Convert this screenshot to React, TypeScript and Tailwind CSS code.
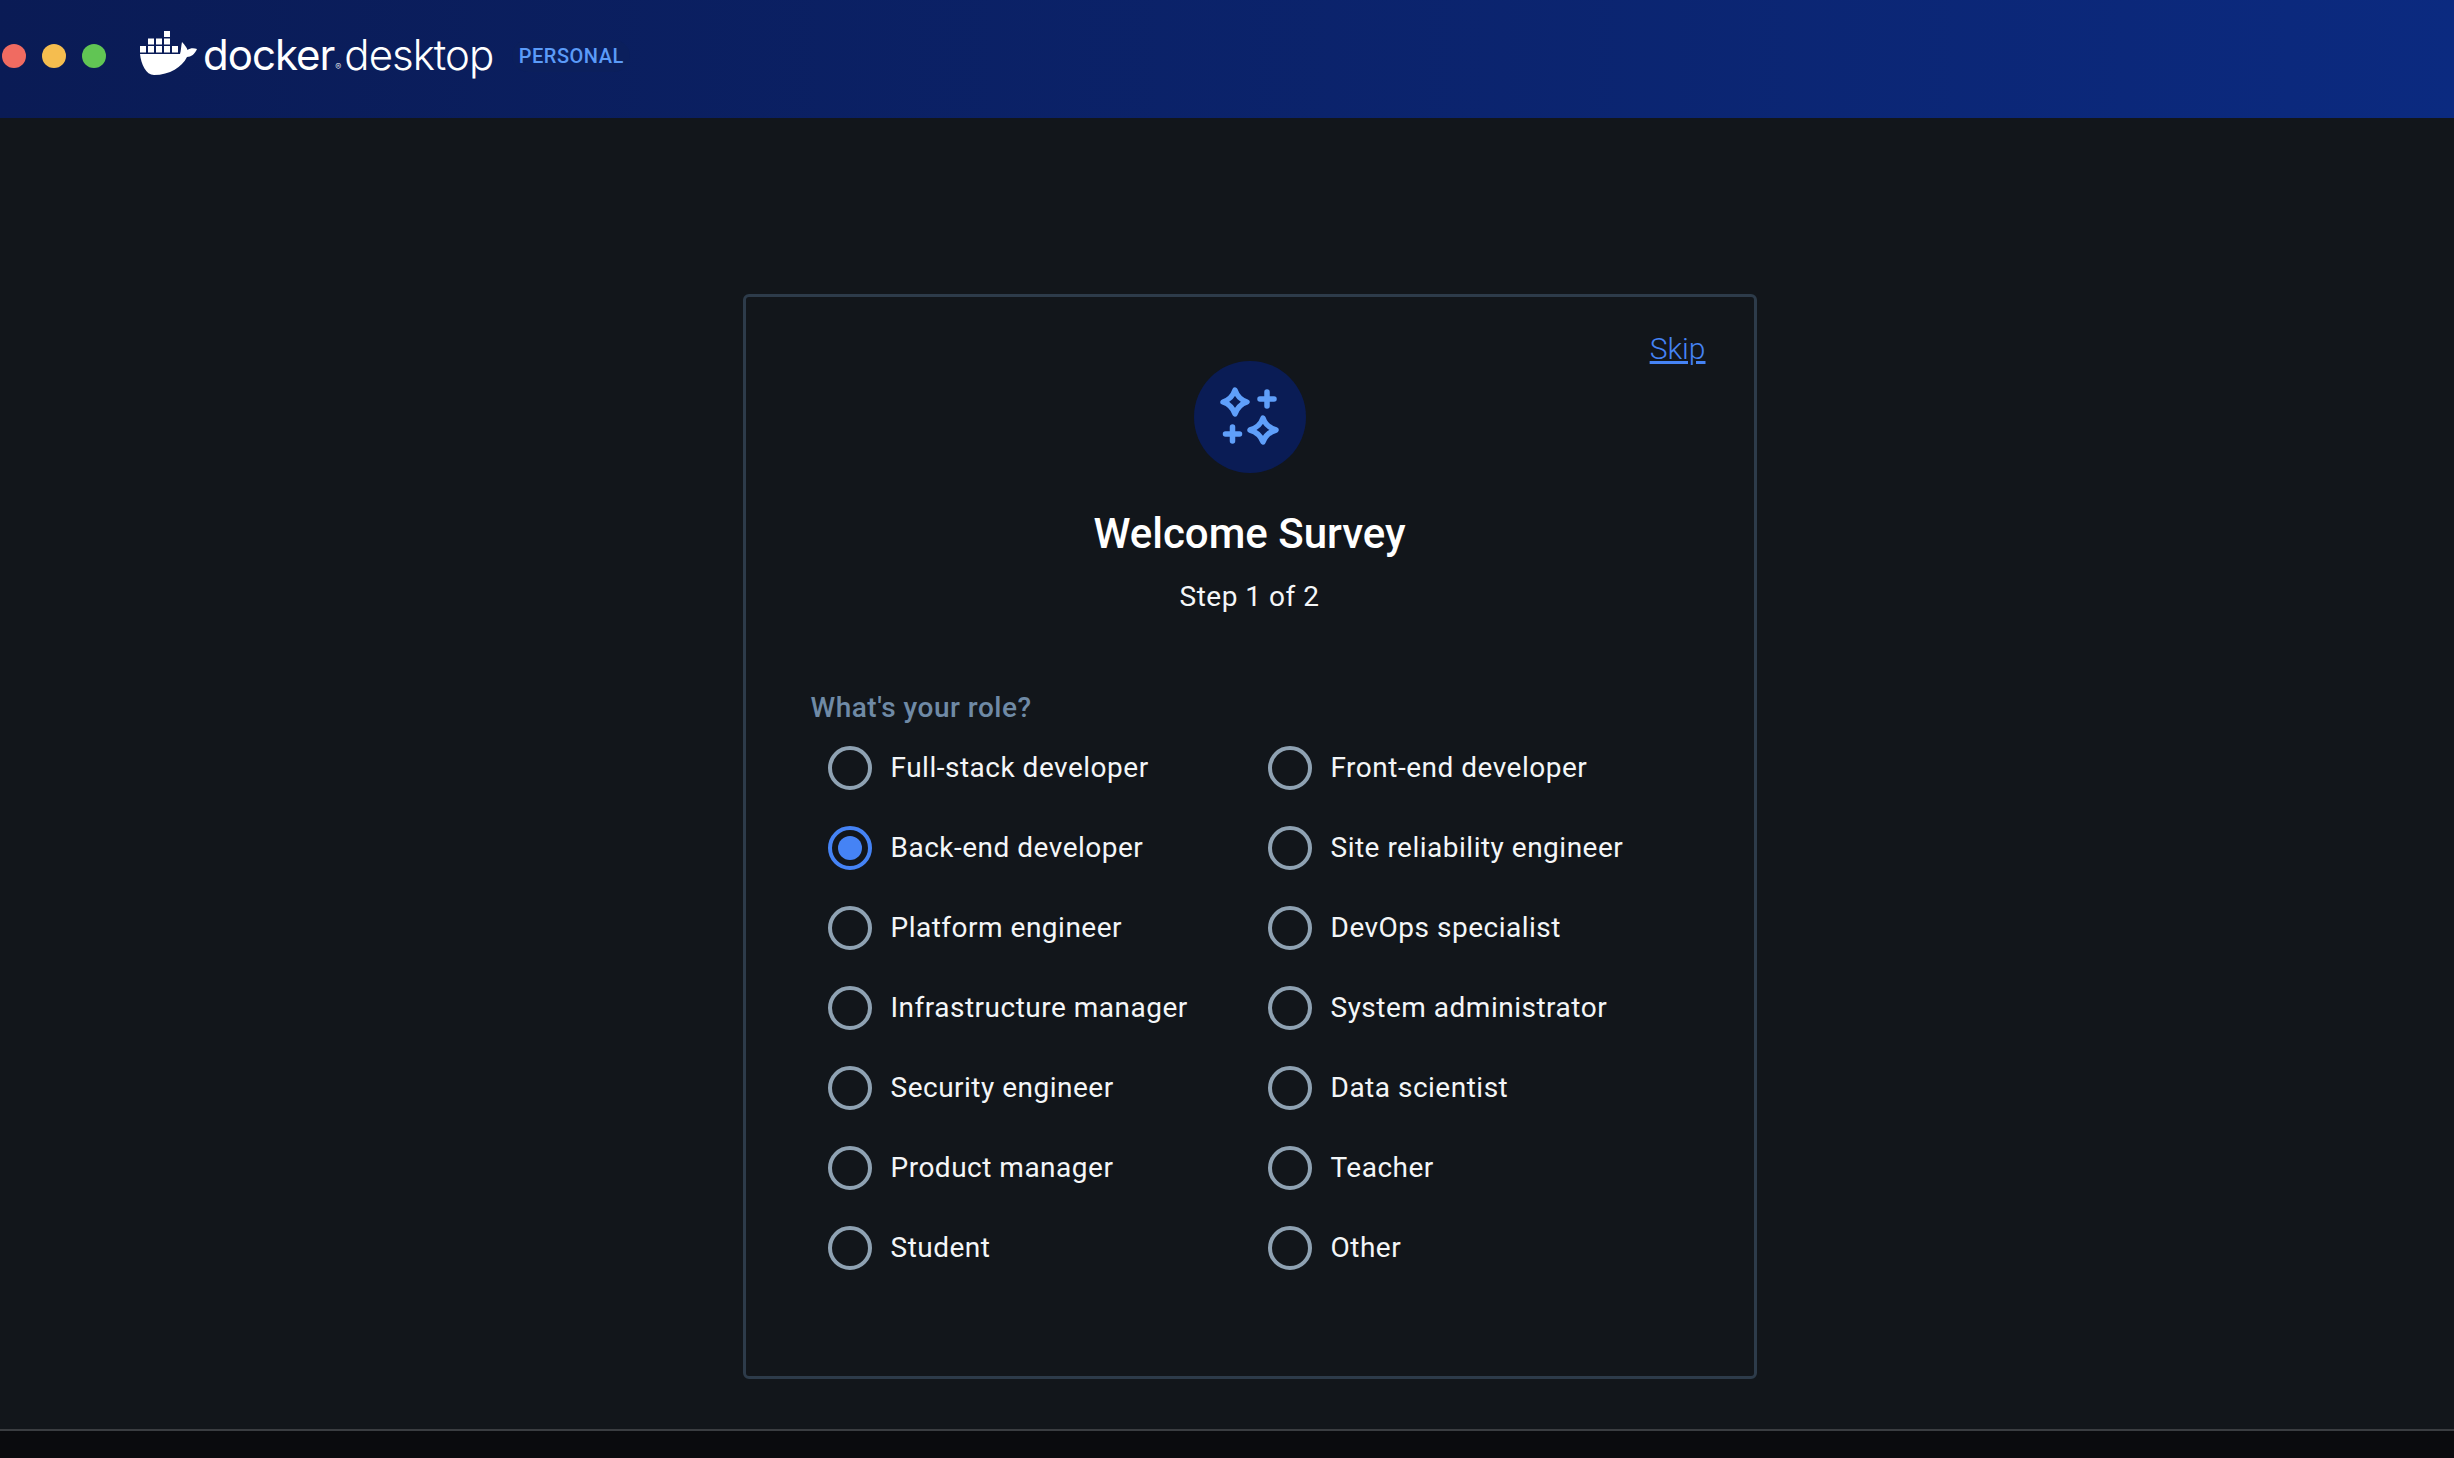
const roles = [
  ["Full-stack developer", "Front-end developer"],
  ["Back-end developer", "Site reliability engineer"],
  ["Platform engineer", "DevOps specialist"],
  ["Infrastructure manager", "System administrator"],
  ["Security engineer", "Data scientist"],
  ["Product manager", "Teacher"],
  ["Student", "Other"],
];

function DockerWhale() {
  return (
    <svg width="58" height="45" viewBox="0 0 58 45" fill="#fff">
      <rect x="24" y="0" width="6" height="6" />
      <rect x="8" y="7.5" width="6" height="6" />
      <rect x="16" y="7.5" width="6" height="6" />
      <rect x="24" y="7.5" width="6" height="6" />
      <rect x="0" y="15" width="6" height="6.5" />
      <rect x="8" y="15" width="6" height="6.5" />
      <rect x="16" y="15" width="6" height="6.5" />
      <rect x="24" y="15" width="6" height="6.5" />
      <rect x="32" y="15" width="6" height="6.5" />
      <path d="M0 23H40C41 20 41 15 42 11C45 14 47 17 47.5 19C50 17 54 17 57 18C55 23 51 26 47 26C42 36 30 44 14 44C6 44 1 33 0 23Z" />
    </svg>
  );
}

function Sparkles() {
  return (
    <svg width="60" height="60" viewBox="0 0 60 60" fill="none" stroke="#5f9ffa" strokeWidth="5.5" strokeLinecap="round" strokeLinejoin="round">
      <path d="M15 3Q18 12 27 15Q18 18 15 27Q12 18 3 15Q12 12 15 3Z" />
      <path d="M43 31Q46 40 56 43Q46 46 43 55Q40 46 30 43Q40 40 43 31Z" />
      <path d="M47 5V19M40 12H54" />
      <path d="M12.5 40V54M5.5 47H19.5" />
    </svg>
  );
}

function Radio({ label, checked }: { label: string; checked?: boolean }) {
  return (
    <label className="flex h-20 items-center gap-[19px]">
      <span
        className={`flex h-11 w-11 items-center justify-center rounded-full border-4 ${
          checked ? "border-[#4583f5]" : "border-[#8fa2b3]"
        }`}
      >
        {checked && <span className="h-6 w-6 rounded-full bg-[#4583f5]" />}
      </span>
      <span className="text-[28px] tracking-[0.5px] text-[#f4f6f8]">{label}</span>
    </label>
  );
}

export default function App() {
  return (
    <div className="flex h-screen flex-col overflow-hidden bg-[#12161b] font-['Roboto',sans-serif]">
      <header className="flex h-[118px] items-center bg-gradient-to-r from-[#0a1b55] to-[#0b2a80] pb-[6px] pl-[2px]">
        <div className="flex gap-4">
          <span className="h-6 w-6 rounded-full bg-[#f06b61]" />
          <span className="h-6 w-6 rounded-full bg-[#f5bd4f]" />
          <span className="h-6 w-6 rounded-full bg-[#61c554]" />
        </div>
        <div className="ml-[34px] -mt-[6px]">
          <DockerWhale />
        </div>
        <div className="ml-[5px] -mt-[2px] flex items-baseline font-['Inter',sans-serif] text-[42px] leading-none font-light tracking-[-1px] text-white">
          <span className="font-normal">docker</span>
          <span className="ml-[1px] text-[9px] tracking-normal">®</span>
          <span className="ml-[3px]">desktop</span>
        </div>
        <span className="ml-[19px] flex h-8 w-[118px] items-center justify-center rounded-full bg-[#0b1f5c] text-[20px] font-medium tracking-[0.5px] text-[#5b9bf8]">
          PERSONAL
        </span>
      </header>
      <main className="flex-1 pl-[45px] pt-[176px]">
        <div className="relative mx-auto flex h-[1085px] w-[1014px] flex-col items-center rounded-md border-[3px] border-[#2d3b4a] pt-[64px]">
          <a className="absolute right-[48px] top-[29px] text-[30px] font-light text-[#4583f5] underline">Skip</a>
          <div className="flex h-28 w-28 items-center justify-center rounded-full bg-[#0a1c55]">
            <Sparkles />
          </div>
          <h1 className="mt-[37px] text-[42px] leading-[48px] font-medium text-white">Welcome Survey</h1>
          <p className="mt-[21px] text-[28px] leading-[36px] tracking-[0.5px] text-[#f4f6f8]">Step 1 of 2</p>
          <div className="mt-[75px] w-full pl-[65px]">
            <p className="text-[28px] leading-[36px] font-medium tracking-[0.5px] text-[#6f8aa6]">What's your role?</p>
            <div className="mt-[2px] ml-[17px] flex flex-col">
              {roles.map(([left, right]) => (
                <div key={left} className="grid grid-cols-[440px_1fr]">
                  <Radio label={left} checked={left === "Back-end developer"} />
                  <Radio label={right} />
                </div>
              ))}
            </div>
          </div>
        </div>
      </main>
      <footer className="h-[29px] border-t-2 border-[#3a3d41] bg-[#0a0b0e]" />
    </div>
  );
}
